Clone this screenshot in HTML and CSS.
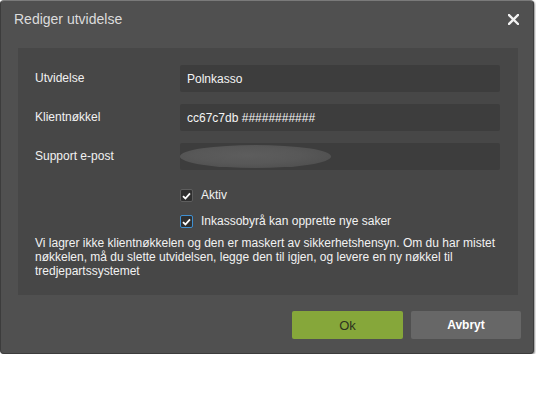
FILE: index.html
```html
<!DOCTYPE html>
<html lang="no">
<head>
<meta charset="utf-8">
<title>Rediger utvidelse</title>
<link rel="stylesheet" href="styles.css">
</head>
<body>
<div class="dialog">
  <div class="header">
    <div class="title">Rediger utvidelse</div>
    <svg class="close" width="11" height="11" viewBox="0 0 11 11"><path d="M1 1 L10 10 M10 1 L1 10" stroke="#f2f2f2" stroke-width="2.4" stroke-linecap="square"/></svg>
  </div>
  <div class="panel">
    <div class="form">
      <div class="label">Utvidelse</div>
      <div class="input">Polnkasso</div>
      <div class="label">Klientnøkkel</div>
      <div class="input">cc67c7db ###########</div>
      <div class="label">Support e-post</div>
      <div class="input"><span class="blur"></span></div>
    </div>
    <div class="checks">
      <div class="check"><span class="box"><svg width="9" height="8" viewBox="0 0 9 8"><path d="M1 4.2 L3.4 6.5 L8 1.3" fill="none" stroke="#fff" stroke-width="1.8"/></svg></span>Aktiv</div>
      <div class="check"><span class="box focus"><svg width="9" height="8" viewBox="0 0 9 8"><path d="M1 4.2 L3.4 6.5 L8 1.3" fill="none" stroke="#fff" stroke-width="1.8"/></svg></span>Inkassobyrå kan opprette nye saker</div>
    </div>
    <p class="note">Vi lagrer ikke klientnøkkelen og den er maskert av sikkerhetshensyn. Om du har mistet nøkkelen, må du slette utvidelsen, legge den til igjen, og levere en ny nøkkel til tredjepartssystemet</p>
  </div>
  <div class="footer">
    <button class="btn ok">Ok</button>
    <button class="btn cancel">Avbryt</button>
  </div>
</div>
</body>
</html>
```
FILE: styles.css
```css
html, body {
  margin: 0;
  padding: 0;
  background: #fff;
}
body {
  font-family: "Liberation Sans", Arial, sans-serif;
  font-size: 12px;
}
.dialog {
  width: 534px;
  box-sizing: border-box;
  background: #505050;
  border: 1px solid #3c3c3c;
  border-top-color: #7a7a7a;
  border-radius: 4px;
  box-shadow: 1px 1px 2px rgba(0,0,0,0.45);
}
.header {
  height: 47px;
  box-sizing: border-box;
  padding: 10px 14px 0 13px;
  display: flex;
  justify-content: space-between;
  align-items: flex-start;
}
.title {
  color: #dcdcdc;
  font-size: 14px;
  line-height: 17px;
}
.close {
  margin-top: 3px;
}
.panel {
  margin: 0 15px 0 17px;
  background: #474747;
  padding: 17px 18px 17px 17px;
}
.form {
  display: grid;
  grid-template-columns: 145px 1fr;
  row-gap: 12px;
  align-items: center;
}
.label {
  color: #f2f2f2;
  line-height: 14px;
  margin-top: -1px;
}
.input {
  height: 27px;
  box-sizing: border-box;
  background: #3d3d3d;
  border-radius: 2px;
  color: #f4f4f4;
  padding: 0 7px;
  display: flex;
  align-items: center;
}
.blur {
  width: 151px;
  height: 23px;
  margin-left: -7px;
  border-radius: 50%;
  background: radial-gradient(ellipse at 45% 45%, #5d5d5d 0%, #585858 45%, #4e4e4e 85%, #4b4b4b 100%);
}
.checks {
  margin-top: 12px;
  padding-left: 145px;
}
.check {
  height: 26px;
  display: flex;
  align-items: center;
  color: #f2f2f2;
}
.box {
  width: 13px;
  height: 13px;
  box-sizing: border-box;
  border: 1px solid #5e5e5e;
  border-radius: 2px;
  background: #2f2f2f;
  margin-right: 8px;
  margin-top: 1px;
  display: flex;
  align-items: center;
  justify-content: center;
}
.box.focus {
  border-color: #3f8fd0;
}
.note {
  margin: 2px 0 0;
  color: #f2f2f2;
  line-height: 14px;
}
.footer {
  display: flex;
  justify-content: flex-end;
  gap: 8px;
  padding: 16px 12px 14px;
}
.btn {
  height: 28px;
  border: 0;
  border-radius: 2px;
  font-family: "Liberation Sans", Arial, sans-serif;
  font-size: 12px;
  padding: 0;
}
.ok {
  width: 111px;
  background: #86a73a;
  color: #2d3320;
  font-size: 13px;
}
.cancel {
  width: 110px;
  background: #676767;
  color: #fff;
  font-weight: bold;
}
```
